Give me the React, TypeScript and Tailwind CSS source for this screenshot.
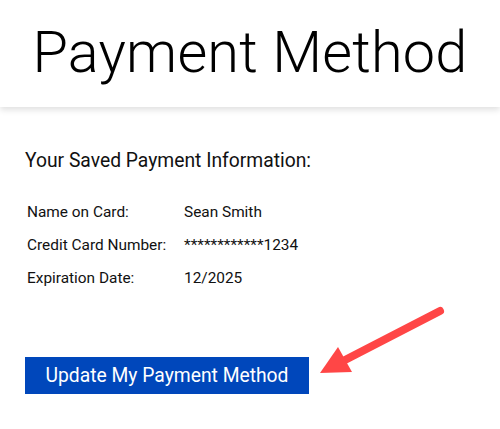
import React from 'react';

const rows = [
  ['Name on Card:', 'Sean Smith'],
  ['Credit Card Number:', '************1234'],
  ['Expiration Date:', '12/2025'],
];

const App: React.FC = () => {
  return (
    <div className="relative w-[500px] h-[429px] bg-white overflow-hidden font-['Roboto',sans-serif] text-black">
      {/* Header */}
      <header className="h-[107px] flex items-center justify-center bg-white shadow-[0_3px_6px_rgba(0,0,0,0.12)]">
        <h1 className="text-[57.6px] font-light leading-none tracking-[0.2px] mt-[-2px]">Payment Method</h1>
      </header>

      <div className="pl-[25px] pt-[42px]">
        <h2 className="text-[19.3px] leading-[24px] text-[#111]">Your Saved Payment Information:</h2>

        <div className="mt-[29px] pl-[2px] grid grid-cols-[157px_auto] gap-y-[13px] text-[15.4px] leading-[20px] text-[#111]">
          {rows.map(([label, value]) => (
            <React.Fragment key={label}>
              <span>{label}</span>
              <span>{value}</span>
            </React.Fragment>
          ))}
        </div>

        <button className="mt-[69px] w-[284px] h-[37px] bg-[#0047bb] text-white text-[19.3px] leading-none">
          Update My Payment Method
        </button>
      </div>

      {/* Annotation arrow */}
      <svg className="absolute left-0 top-0 pointer-events-none" width="500" height="429" viewBox="0 0 500 429">
        <line x1="440" y1="311" x2="345" y2="360" stroke="#ff4646" strokeWidth="8" strokeLinecap="round" />
        <polygon points="320,373 338,347 352,372" fill="#ff4646" />
      </svg>
    </div>
  );
};

export default App;
